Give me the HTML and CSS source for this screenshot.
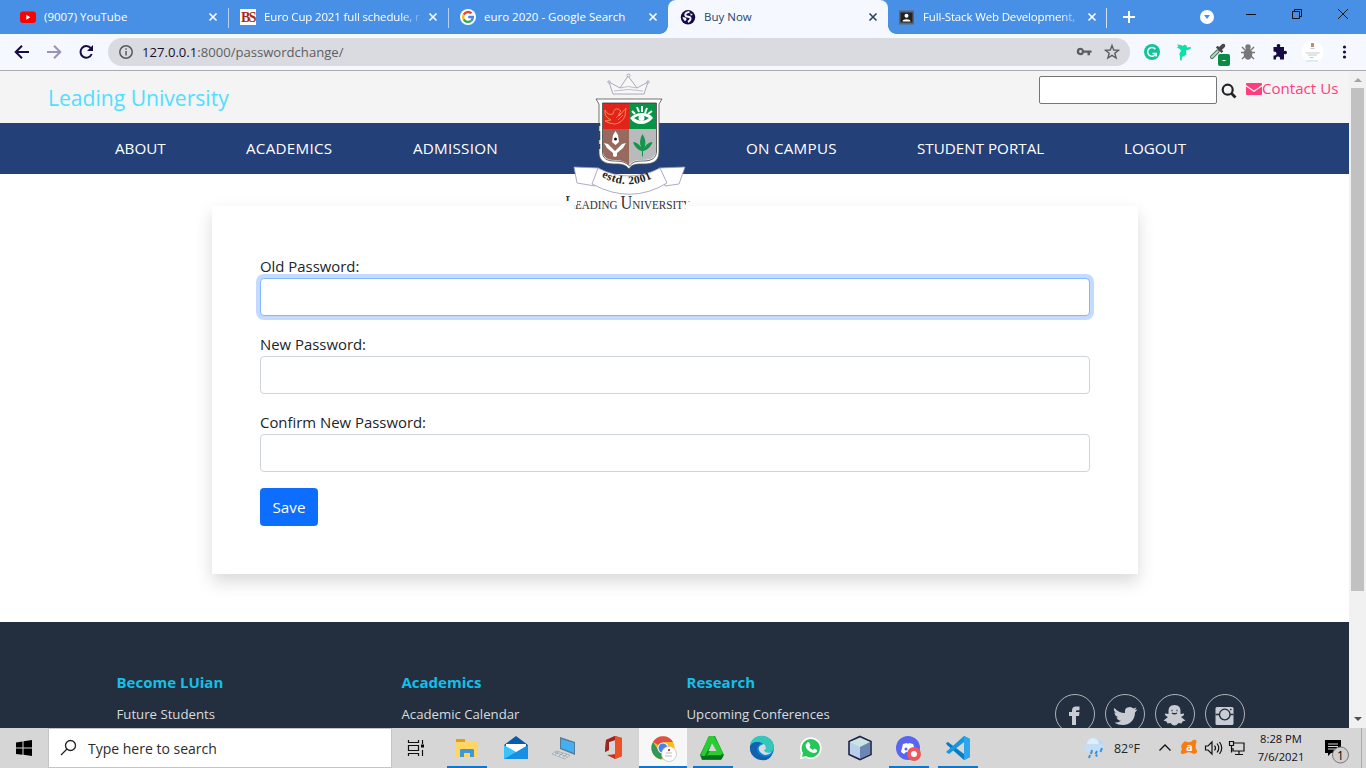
FILE: index.html
```html
<!DOCTYPE html>
<html lang="en">
<head>
<meta charset="utf-8">
<title>Buy Now</title>
<link rel="stylesheet" href="styles.css">
</head>
<body>
<div class="desktop">
  <div class="tabstrip">
    <div class="tab">
      <svg class="fav" viewBox="0 0 16 16"><rect y="2.5" width="16" height="11.5" rx="3" fill="#f00"/><path d="M6.3 5.8v5l4-2.5z" fill="#fff"/></svg>
      <span class="tab-title">(9007) YouTube</span>
      <svg class="x" viewBox="0 0 10 10"><path d="M1.5 1.5l7 7M8.500 1.500l-7 7"/></svg>
    </div>
    <div class="tab sep">
      <span class="fav bs">BS</span>
      <span class="tab-title fade">Euro Cup 2021 full schedule, r</span>
      <svg class="x" viewBox="0 0 10 10"><path d="M1.5 1.5l7 7M8.500 1.500l-7 7"/></svg>
    </div>
    <div class="tab sep">
      <svg class="fav" viewBox="0 0 16 16"><circle cx="8" cy="8" r="8" fill="#fff"/><g fill="none" stroke-width="2.300"><path d="M11.500 4.400A5 5 0 0 0 3.700 5.600" stroke="#ea4335"/><path d="M3.700 5.600a5 5 0 0 0 0 4.800" stroke="#fbbc05"/><path d="M3.700 10.400a5 5 0 0 0 7.400 1.400" stroke="#34a853"/><path d="M11.100 11.800A5 5 0 0 0 12.900 8H8.200" stroke="#4285f4"/></g></svg>
      <span class="tab-title">euro 2020 - Google Search</span>
      <svg class="x" viewBox="0 0 10 10"><path d="M1.5 1.5l7 7M8.500 1.500l-7 7"/></svg>
    </div>
    <div class="tab active">
      <svg class="fav" viewBox="0 0 16 16"><circle cx="8" cy="8.300" r="7.200" fill="#170b47"/><path d="M9.500 3Q5 3.500 5.300 6q.4 1.700 3 1.700 2.500.3 2.200 2.300-.5 2-2.500 3" fill="none" stroke="#f5f8ff" stroke-width="2"/><path d="M2.500 8l3.500.8.500 2-1.500 1.500q-2.300-1.600-2.500-4.300M10.500 4l2.500 2-2.500.5z" fill="#f5f8ff"/></svg>
      <span class="tab-title">Buy Now</span>
      <svg class="x" viewBox="0 0 10 10"><path d="M1.5 1.5l7 7M8.500 1.500l-7 7"/></svg>
    </div>
    <div class="tab last">
      <svg class="fav" viewBox="0 0 16 16"><path d="M0 1.500h15v14H0z" fill="#606470"/><path d="M1.500 3.500h12v10h-12z" fill="#222"/><circle cx="7.500" cy="6.700" r="2" fill="#fff"/><path d="M3.500 12.500c0-3 8-3 8 0z" fill="#fff"/></svg>
      <span class="tab-title fade">Full-Stack Web Development,</span>
      <svg class="x" viewBox="0 0 10 10"><path d="M1.5 1.5l7 7M8.500 1.500l-7 7"/></svg>
    </div>
    <svg class="window-tools" viewBox="0 0 260 34"><path d="M.5 8v20" stroke="#d0e1f8"/><path d="M17 17h12M23 11v12" stroke="#fff" stroke-width="2"/><circle cx="101" cy="17" r="7" fill="#fff"/><path d="M98 15h6l-3 4z" fill="#4790e6"/><g fill="none" stroke="#111"><path d="M140 14.500h10M186.500 11.500h7v7h-7zM188.500 11V9.500h7v7H194M232 9l10 10M242 9l-10 10"/></g></svg>
  </div>

  <div class="toolbar">
    <svg class="navicons" viewBox="0 0 108 36"><g fill="none" stroke-width="2"><path d="M29 18H16m6-6.300L15.700 18l6.300 6.300" stroke="#170b47"/><path d="M47 18h13m-6-6.300l6.300 6.300-6.300 6.300" stroke="#9a93b9"/><path d="M90.800 14.200A5.800 5.800 0 1 0 91.700 20" stroke="#170b47"/></g><path d="M93 11v6h-6z" fill="#170b47"/></svg>
    <div class="address">
      <svg class="info" viewBox="0 0 16 16"><circle cx="8" cy="8" r="6.200" fill="none" stroke="#555960" stroke-width="1.500"/><path d="M7.300 7h1.500v4.500H7.300zM7.300 4.300h1.500v1.500H7.300z" fill="#555960"/></svg>
      <span class="url"><b>127.0.0.1</b>:8000/passwordchange/</span>
      <svg class="key" viewBox="0 0 50 20"><path fill="#5b5d61" fill-rule="evenodd" d="M4.500 5.800a3.700 3.700 0 1 0 3.500 4.900h3.500v2.600H14v-2.600h1.500V8.400H8a3.700 3.700 0 0 0-3.500-2.600zm0 2.300a1.400 1.400 0 1 1 0 2.800 1.400 1.400 0 0 1 0-2.800z"/><path d="M36 3.500l1.700 4.500 4.800.3-3.700 3 1.300 4.700-4.100-2.600-4.100 2.600 1.300-4.700-3.700-3 4.800-.3z" fill="none" stroke="#5b5d61" stroke-width="1.400"/></svg>
    </div>
    <svg class="ext" viewBox="0 0 232 36">
      <circle cx="18" cy="18" r="8" fill="#15c39a"/><path d="M21.300 15.200a4.300 4.300 0 1 0 .7 4.200h-3.500M22.200 19v3.500" fill="none" stroke="#fff" stroke-width="1.500"/>
      <path d="M43 10.500l4 .5 2 1q1-2 3.500-.5l.5 2 4-.5-.5 2-4.500 1.500.500 4-2.500 1.500-2 1-.5 4-1.500-1 0-3.500q-1.500-3 1-5.500l-1-2-3.500-1.500 2-.5z" fill="#10dfaa"/>
      <g transform="rotate(45 84 17)"><rect x="82.500" y="16" width="3" height="11" rx="1.500" fill="#9fe3bd" stroke="#52725f"/><path d="M82 9q2-3 4 0v4.500h2V16h-8v-2.500h2z" fill="#4a484a"/></g><rect x="84" y="20" width="12" height="12" rx="2" fill="#078b45"/><path d="M88.500 26.500h3" stroke="#fff"/>
      <g stroke="#777" stroke-width="1.400" fill="#777"><ellipse cx="114" cy="20" rx="3.600" ry="5"/><circle cx="114" cy="13" r="2"/><path d="M108 13l3 3M120 13l-3 3M107 18.500h14M108 25l3-3M120 25l-3-3" fill="none"/></g>
      <path d="M139.500 13h3.500q-1-3 1.500-3t1.500 3h4v4q3-1 3 1.500t-3 1.500v5.500h-4q.5-3-2-3t-2 3h-2.500v-4q3 0 3-2t-3-2z" fill="#170b47"/>
      <circle cx="178.500" cy="18" r="11" fill="#fff"/><path d="M177 9h3v4h-3z" fill="#bc8d83"/><path d="M176.500 14.500h4M171.500 19h14M174 21h9M175.500 23.500h4" stroke="#c9c9cd"/><path d="M172 27h12" stroke="#b4dcf2"/>
      <g fill="#170b47"><circle cx="210.500" cy="13" r="1.600"/><circle cx="210.500" cy="18" r="1.600"/><circle cx="210.500" cy="23" r="1.600"/></g>
    </svg>
  </div>

  <div class="viewport">
    <div class="page">
      <header class="topbar">
        <a class="brand">Leading University</a>
        <div class="search-area">
          <input class="search" type="text">
          <svg class="glass" viewBox="0 0 16 16"><circle cx="6.700" cy="6.700" r="5" fill="none" stroke="#212529" stroke-width="2.200"/><path d="M10.300 10.300l4.200 4.200" stroke="#212529" stroke-width="2.800"/></svg>
          <a class="contact"><svg viewBox="0 0 16 12"><path d="M1 0h14q1 0 1 1v1L8 7.500 0 2V1q0-1 1-1zM0 3.500L8 9l8-5.500V11q0 1-1 1H1q-1 0-1-1z" fill="#ff3d7f"/></svg><span>Contact Us</span></a>
        </div>
      </header>
      <nav class="nav">
        <a>ABOUT</a><a class="wide">ACADEMICS</a><a class="wide">ADMISSION</a><a class="wide">ON CAMPUS</a><a>STUDENT PORTAL</a><a>LOGOUT</a>
      </nav>
      <svg class="crest" viewBox="0 3 160 147">
        <defs>
          <clipPath id="seal"><path d="M16 125h4.500v8H16zM24 137h3v-12h107v18H24zM134 129h7v3l-2 2-3 1v8h-3z"/></clipPath>
          <clipPath id="shield"><path d="M53 35h53v47c0 7-5 10-13 10-7 0-11 1-14 5-4-4-9-5-15-5-7 0-11-3-11-9z"/></clipPath>
          <path id="motto" d="M50.500 108Q79 125 108 107"/>
        </defs>
        <path d="M63 26l-4-12 11 6 8-12 9 12 11-6-4 12z" fill="#f7f7f8" stroke="#9a95b0" stroke-width=".8"/>
        <path d="M64 23q15-3 29 0M70 20q8-3 17 0" fill="none" stroke="#a6a2b5" stroke-width=".7"/>
        <g fill="#f7f7fa" stroke="#827c99" stroke-width=".6"><circle cx="78.500" cy="7.500" r="1.500"/><circle cx="59" cy="14" r="1.200"/><circle cx="98" cy="14" r="1.200"/></g>
        <path d="M46 31h66l-3 5v48c0 10-7 12-15 12-8 0-12 0-15 5-4-5-8-5-15-5-9 0-15-3-15-11V36z" fill="#fff" stroke="#51524d" stroke-width=".8"/>
        <path d="M49.500 55v3M49.500 63v9M49.500 76v5" stroke="#244078" stroke-width="1.500"/>
        <g clip-path="url(#shield)"><path d="M53 35h26v26H53z" fill="#e2231c"/><path d="M79 35h28v26H79z" fill="#079447"/><path d="M53 61h26v38H53z" fill="#98695d"/><path d="M79 61h28v38H79z" fill="#b8babb"/></g>
        <path d="M52.500 35h54v48c0 7-5 10-13 10-8 0-11 1-14 5-4-4-8-5-15-5-8 0-12-3-12-9z" fill="none" stroke="#353935" stroke-width=".8"/>
        <path d="M55 42q3 6 8 4 1-6 5-5l3 2-2 2 0 3 7-8-1 8q-3 7-10 8-5 0-10-3l6-1q-7-3-6-10M66 50l5-5M68 52l5-5" fill="none" stroke="#f0a35b" stroke-width=".8"/>
        <path d="M80 50q5-5 12-5 8 0 11 5-5 6-12 6-7 0-11-6z" fill="#fff"/><path d="M82 43l3 3M87 39l2 5M92 38v6M97 40l-2 5M102 43l-4 3" stroke="#fff" stroke-width="2"/><path d="M84 50q7-5 15 0-7 6-15 0" fill="#079447"/><circle cx="91.500" cy="50" r="3" fill="#fff"/>
        <path d="M62 74l1-7 2.500-4 2.500 4 1 7-3.500 3z" fill="#fff"/><circle cx="65.500" cy="71" r="1.500" fill="#111"/><path d="M54 75l4 1 7 7 7-7 4-1-3 5-6 5v3l-2 1-2-1v-3l-6-5z" fill="#fff"/>
        <path d="M92.500 66q4.500 7 2 13 4-5 8-5-2 6-7.500 8.500l-2 .5v5.500h-1V83l-2-.5q-5-2.500-7-8.500 4 0 8 5-2.500-6 1.500-13" fill="#12964c"/>
        <g fill="#fff" stroke="#9a95b8" stroke-width=".8"><path d="M49 100l-25-1 3 16 18 3 1-8z"/><path d="M109 100l26-1-6 17-14 2-1-8z"/><path d="M48 100q31 16 62 0l7 15q-36 22-75 1z"/></g>
        <text class="motto"><textPath href="#motto" startOffset="1">estd. 2001</textPath></text>
        <g clip-path="url(#seal)"><text class="crest-name" x="15" y="141" textLength="126" lengthAdjust="spacingAndGlyphs"><tspan class="cap">L</tspan>EADING <tspan class="cap">U</tspan>NIVERSITY</text></g>
      </svg>
      <main class="content">
        <form class="card">
          <label>Old Password:</label><input class="field focus" type="text">
          <label>New Password:</label><input class="field" type="text">
          <label>Confirm New Password:</label><input class="field" type="text">
          <button class="save" type="button">Save</button>
        </form>
      </main>
      <footer class="footer">
        <div class="fcol"><h3>Become LUian</h3><a>Future Students</a></div>
        <div class="fcol"><h3>Academics</h3><a>Academic Calendar</a></div>
        <div class="fcol fwide"><h3>Research</h3><a>Upcoming Conferences</a></div>
        <div class="social">
          <svg viewBox="0 0 40 40"><circle cx="20" cy="20" r="19.500"/><path d="M17 31v-9h-3v-4h3v-1.500q0-4 4-4h3.500v3.700H22q-1 0-1 1V18h3.500l-.5 4h-3v9z"/></svg>
          <svg viewBox="0 0 40 40"><circle cx="20" cy="20" r="19.500"/><path d="M9.500 14q4 5 10.500 5-1-6 5-6 2 0 3.500 1.500l3-1-1.500 2.500 2.500-.5-2.500 3c0 8-6 12.500-12 12.500q-5 0-8.500-2.200 4 0 6.500-2-3.500-.2-4.500-3.500h2q-4-1-4-5l2 .5q-4-2-2-4.800z"/></svg>
          <svg viewBox="0 0 40 40"><circle cx="20" cy="20" r="19.500"/><path d="M13.500 18q-.5-7 6-7t6 7v2l3.500-.5q.5 2-3 3.500l4.500 3.500-3 1-1 2-3-.5q-2 2.500-4 2.500t-4-2.500l-3 .5-1-2-3-1 4.500-3.500q-3.500-1.500-3-3.500l3.500.5z"/><path class="cut" d="M16.500 16.500h1M21.500 16.500h1M17 19q2.500 1.500 5 0"/></svg>
          <svg viewBox="0 0 40 40"><circle cx="20" cy="20" r="19.500"/><rect x="10.500" y="13" width="18" height="18" rx="1.500"/><path class="cut" d="M10.500 20.500h4.500M24.500 20.500h4M25 15.500h1.500M17 16a5.300 5.300 0 1 0 5.500 0 5.300 5.300 0 0 0-5.500 0z"/></svg>
        </div>
      </footer>
    </div>
    <div class="scrollbar"><i class="up"></i><i class="thumb"></i><i class="down"></i></div>
  </div>

  <div class="taskbar">
    <svg class="start" viewBox="0 0 48 40"><path d="M16 14.500l6.500-1v6H16zM23.500 13.300l8.500-1.300v7.500h-8.500zM16 20.500h6.500v6.300L16 26zM23.500 20.500H32V28l-8.500-1.200z"/></svg>
    <div class="tasksearch"><svg viewBox="0 0 18 18"><circle cx="10.500" cy="6.500" r="5" fill="none" stroke="#222" stroke-width="1.300"/><path d="M7 10l-6 6" stroke="#222" stroke-width="1.300"/></svg><span>Type here to search</span></div>
    <svg class="app first" viewBox="0 0 50 40"><path d="M16.500 12v2.500h10V12M16.500 28v-2.500h10V28M16.500 17.500h10v5h-10zM30.500 12v4M30.500 22v6" fill="none" stroke="#111" stroke-width="1.200"/><path d="M29 16.500h3v3h-3z"/></svg>
    <svg class="app open" viewBox="0 0 49 40"><path d="M14 11h9l2 2h10v16H14z" fill="#ffd565"/><path d="M14 11h9v3h-9z" fill="#dda018"/><path d="M18 22q0-1 1-1h12q1 0 1 1v7h-4v-4h-6v4h-4z" fill="#3c98d7"/></svg>
    <svg class="app" viewBox="0 0 49 40"><path d="M13 17L25 8l12 9v3H13z" fill="#075ba9"/><path d="M15 16h20v10H15z" fill="#fff"/><path d="M13 17l24 14H13z" fill="#38c4fb"/><path d="M37 17L13 31h24z" fill="#178fe4"/></svg>
    <svg class="app" viewBox="0 0 49 40"><path d="M20 9l15 5v13l-15-6z" fill="#567b99"/><path d="M21 11l13 4v10l-13-5z" fill="#42b0f3"/><path d="M16 23l14 4-5 4-13-5z" fill="#dce0e3" stroke="#98a3a9" stroke-width=".7"/><path d="M15 24.500l12 4M19 23.500l-4 3M23 25l-4 3M27 26l-4 3.500" stroke="#8c979e" stroke-width=".7"/></svg>
    <svg class="app" viewBox="0 0 49 40"><path d="M26 8l-9 4-1 12 4-2v-8l6-2v14l-8 1 8 4 7-3V10z" fill="#c9301c"/><path d="M26 8l-9 4-1 12 4-2v-8l6-2z" fill="#9c2423"/><path d="M26 8l7 2v18l-7 3z" fill="#ec5225"/><path d="M21 15l5-1.500V26l-5 .5z" fill="#d6d6d6"/></svg>
    <svg class="app open current" viewBox="0 0 48 40"><g transform="translate(24 20)"><circle r="11.500" fill="#fbbd14"/><path d="M0 0L-10-6A11.500 11.500 0 0 1 10-6H0z" fill="#dc5248"/><path d="M-10-6A11.500 11.500 0 0 0-2 11.300L4 3-4 3z" fill="#319859"/><circle r="5.500" fill="#fff"/><circle r="4.500" fill="#4383ed"/><circle cx="6" cy="6" r="7.500" fill="#fff" stroke="#bbb" stroke-width=".7"/><path d="M3 5h6M2 8h7" stroke="#bbb"/><path d="M5 1h2v2H5z" fill="#b54f47"/></g></svg>
    <svg class="app open" viewBox="0 0 49 40"><path d="M21 8h6l9 19-3 5H14l-2-5z" fill="#09911e"/><path d="M20 9l2-1h4l9 17-2 2H19l3-4h6l-4-8-8 14-3-2z" fill="#2bcc32"/><path d="M24 15l4.500 8h-8z" fill="#d6d6d6"/><path d="M13 28h20l2-2-1 5H14z" fill="#087119"/></svg>
    <svg class="app" viewBox="0 0 49 40"><circle cx="25" cy="20" r="12" fill="#0b82d5"/><path d="M13 17C16 4 35 5 37 19q0 5-6 6-5 0-4-3 3-7-6-8-6 0-8 3z" fill="#35c8ba"/><path d="M13 18q5-6 11-3-7 5-2 11 6 5 13 1-5 8-14 4-9-4-8-13z" fill="#1260ae"/><path d="M27 16q4 5 0 6 1 4 8 2-6 6-12 0-4-6 4-8z" fill="#d8dadb"/></svg>
    <svg class="app" viewBox="0 0 49 40"><path d="M15 30l1-5a10 10 0 1 1 4 4z" fill="#25c65a" stroke="#fff" stroke-width="1.700"/><path d="M21 15q1-2 2.500 0l1 2.500-1 1.500q1 2 3.500 3l1.500-1.500 2.500 1.500q.5 3-3.500 3-7-1.500-8-7.500 0-1.500 1.500-2.500z" fill="#fff"/></svg>
    <svg class="app" viewBox="0 0 49 40"><path d="M25 8.500l11 5v13l-11 5-11-5v-13z" fill="#b9d0eb" stroke="#202247" stroke-width="1.600"/><path d="M15 14l10 5 10-5-10-4z" fill="#cce4df"/><path d="M25 19l10-5v12l-10 5z" fill="#6a87b4"/></svg>
    <svg class="app open" viewBox="0 0 49 40"><circle cx="24" cy="20" r="12" fill="#5965ef"/><path d="M17 24l2-8 4-1 1 1 1-1 4 1 3 8-4 2-2-2h-4l-2 2z" fill="#fff"/><circle cx="22" cy="21" r="1.500" fill="#5965ef"/><circle cx="30" cy="26" r="7" fill="#ee585a"/><circle cx="30" cy="26" r="3" fill="#fff"/></svg>
    <svg class="app open" viewBox="0 0 49 40"><path d="M31 8l6 3v18l-6 3-17-15-1-2 2-1 16 12V8z" fill="#087dc4"/><path d="M31 8v6L16 26l-3-2z" fill="#1797dc"/><path d="M31 8l6 3v18l-6 3z" fill="#2ca7ee"/></svg>
    <div class="tray">
      <svg class="weather" viewBox="0 0 24 24"><circle cx="15" cy="9" r="5.500" fill="#b7d9f7"/><circle cx="10" cy="8" r="6" fill="#dcedfb"/><rect x="1" y="8" width="20" height="8" rx="4" fill="#c5def6"/><path d="M9 14l-1 4M14 15l-1.500 3M19 12l-1.500 4M7 19l-1 3M14 18.500l-1 2" stroke="#2d94e6" stroke-width="2"/></svg>
      <span class="temp">82°F</span>
      <svg class="trayicons" viewBox="0 0 96 40"><path d="M7.500 22.500l5.500-5.500 5.500 5.500" fill="none" stroke="#111" stroke-width="1.300"/><path d="M31 15q2-3 4-1 4 1 6-2 5-1 3 4-1 3 0 5 3 4-2 5l-5-2-6 2q-4 0-1-5-2-3 1-6z" fill="#f77c12"/><text class="av" x="34" y="23">a</text><path d="M53.500 18H56l4-4v12l-4-4h-2.500zM62.500 17.500q2 2.500 0 5M65 15.500q3.500 4.500 0 9M67.500 14q4.500 6 0 12" fill="none" stroke="#111" stroke-width="1.200"/><path d="M82 15h10v8H81v-3M87 23v3M83 26.500h8M77.500 13.500h4v4h-4zM79.500 17.500v7" fill="none" stroke="#111" stroke-width="1.200"/></svg>
      <div class="clock"><span>8:28 PM</span><span>7/6/2021</span></div>
      <svg class="notice" viewBox="0 0 44 40"><path d="M5 12h16v13H11l-3 3v-3H5z"/><path d="M8 16h10M8 18.500h10M8 21h7" stroke="#d8d8d8"/><circle cx="20.500" cy="27" r="8" fill="#cfcfcf" stroke="#777"/><text x="17" y="31.500">1</text><path d="M41.500 0v40" stroke="#aaa"/></svg>
    </div>
  </div>
</div>
</body>
</html>
```
FILE: styles.css
```css
* { box-sizing: border-box; }
body { margin: 0; font-family: "Open Sans", "Noto Sans", sans-serif; color: #212529; }
svg { display: block; flex: none; }
.desktop { width: 1366px; height: 768px; overflow: hidden; display: flex; flex-direction: column; }

.tabstrip { height: 34px; background: #4790e6; display: flex; padding-left: 8px; flex: none; }
.tab { width: 220px; height: 34px; padding: 0 10px 0 12px; display: flex; align-items: center; color: #fff; position: relative; flex: none; }
.tab.sep::before { content: ""; position: absolute; left: 0; top: 8px; width: 1px; height: 20px; background: #b4d2f6; }
.fav { width: 16px; height: 16px; flex: none; }
.bs { background: #fff; color: #a62a17; font: bold 14px/17px "Liberation Serif", serif; text-align: center; letter-spacing: -1.5px; }
.tab-title { flex: 1; min-width: 0; margin-left: 8px; font-size: 11.5px; line-height: 34px; white-space: nowrap; }
.fade { letter-spacing: -.15px; -webkit-mask-image: linear-gradient(90deg, #000 136px, transparent 162px); mask-image: linear-gradient(90deg, #000 136px, transparent 162px); }
.x { width: 10px; height: 10px; stroke: #fff; stroke-width: 1.6; margin-left: 4px; }
.active { background: #f5f8ff; color: #26446b; border-radius: 8px 8px 0 0; }
.active .x { stroke: #26446b; }
.active::before, .active::after { content: ""; position: absolute; bottom: 0; width: 8px; height: 8px; }
.active::before { left: -8px; background: radial-gradient(circle at 0 0, transparent 7.5px, #f5f8ff 8px); }
.active::after { right: -8px; background: radial-gradient(circle at 100% 0, transparent 7.5px, #f5f8ff 8px); }
.tab.last { width: 219px; padding-left: 11px; }
.window-tools { width: 260px; height: 34px; margin-left: -1px; }

.toolbar { height: 37px; background: #f5f8ff; border-bottom: 1px solid #a9abb1; display: flex; flex: none; }
.navicons { width: 108px; height: 36px; }
.address { width: 1022px; height: 28px; margin-top: 4px; border-radius: 14px; background: #d9dbe0; display: flex; align-items: center; padding: 0 4px 0 10px; }
.info { width: 16px; height: 16px; }
.url { flex: 1; margin-left: 8px; font-size: 13.1px; color: #5c5f63; }
.url b { font-weight: 400; color: #170f2e; }
.key { width: 50px; height: 20px; }
.ext { width: 232px; height: 36px; margin-left: 4px; }

.viewport { height: 657px; display: flex; flex: none; }
.page { width: 1349px; height: 657px; overflow: hidden; background: #fff; position: relative; display: flex; flex-direction: column; }
.topbar { height: 52px; background: #f4f4f4; display: flex; justify-content: space-between; padding: 0 10px 0 48px; flex: none; }
.brand { color: #4fdfff; font-size: 21.1px; line-height: 54px; }
.search-area { display: flex; align-items: flex-start; padding-top: 5px; }
.search { width: 178px; height: 28px; border: 1px solid #767676; border-radius: 2px; background: #fff; padding: 0; }
.glass { width: 16px; height: 16px; margin: 7px 9px 0 4px; }
.contact { color: #ff3d7f; font-size: 15.1px; line-height: 25px; display: flex; width: 93px; white-space: nowrap; }
.contact svg { width: 16px; height: 12px; margin-top: 7px; }
.nav { height: 51px; background: #244078; color: #fff; font-size: 15.2px; line-height: 51px; display: grid; grid-template-columns: 131px 167px 333px 171px 207px auto; padding-left: 115px; white-space: nowrap; flex: none; }
.nav .wide { letter-spacing: .25px; }
.crest { position: absolute; left: 550px; top: 0; width: 160px; height: 147px; z-index: 2; }
.motto { font: bold 11.5px "Liberation Serif", serif; fill: #222; letter-spacing: .5px; }
.crest-name { font: 13px "Liberation Serif", serif; fill: #333; }
.cap { font-size: 19px; }
.content { padding: 32px 211px 48px 212px; flex: none; }
.card { height: 368px; background: #fff; box-shadow: 0 8px 16px rgba(0, 0, 0, .15); padding: 48px; }
.card label { display: block; font-size: 14.9px; line-height: 24px; color: #212529; }
.field { display: block; width: 830px; height: 38px; border: 1px solid #ced4da; border-radius: 4px; margin: 0 0 16px; background: #fff; }
.focus { border-color: #86b7fe; box-shadow: 0 0 0 4px #c2dbff; outline: none; }
.save { display: block; width: 58px; height: 38px; padding: 0; border: 0; border-radius: 4px; background: #0d6efd; color: #fff; font: 15.2px "Open Sans", sans-serif; }
.footer { height: 106px; background: #232f3f; padding: 48px 103.5px 0 116.5px; display: flex; flex: none; }
.fcol { width: 285px; }
.fwide { width: 368.5px; }
.fcol h3 { margin: 0; color: #14bfe8; font-size: 15px; font-weight: 700; line-height: 24px; }
.fcol a { display: block; margin-top: 9px; font-size: 13.2px; line-height: 22px; color: #d8dbdf; white-space: nowrap; }
.social { display: flex; gap: 10px; padding-top: 24px; }
.social svg { width: 40px; height: 40px; fill: #c9cdd3; }
.social circle { fill: none; stroke: #aeb3b9; }
.social .cut { fill: none; stroke: #232f3f; stroke-width: 1.4; }

.scrollbar { width: 17px; background: #f1f1f1; display: flex; flex-direction: column; align-items: center; }
.up { border: 4px solid transparent; border-top: 0; border-bottom: 4px solid #a3a3a3; margin: 7px 0 6px; }
.thumb { width: 13px; height: 503px; background: #c1c1c1; }
.down { border: 4px solid transparent; border-bottom: 0; border-top: 4px solid #505050; margin-top: 126px; }

.taskbar { height: 40px; background: #d6d6d6; display: flex; flex: none; }
.start { width: 48px; height: 40px; }
.tasksearch { width: 344px; height: 40px; border: 1px solid #c5c5c5; background: #fff; display: flex; align-items: center; padding-left: 11px; flex: none; }
.tasksearch svg { width: 18px; height: 18px; }
.tasksearch span { margin-left: 10px; font-size: 14px; color: #2c2c2c; }
.app { width: 49px; height: 40px; }
.app.first { width: 50px; }
.app.open { background: linear-gradient(#0878d7, #0878d7) 50% 100% / 40px 2px no-repeat; }
.app.open.current { background: linear-gradient(#0878d7, #0878d7) 50% 100% / 48px 2px no-repeat, #f7f7f7; width: 48px; margin: 0 1px; }
.tray { flex: 1; display: flex; align-items: center; justify-content: flex-end; }
.weather { width: 24px; height: 24px; }
.temp { margin-left: 7px; width: 33px; font-size: 12.4px; white-space: nowrap; }
.trayicons { width: 96px; height: 40px; margin-left: 5px; }
.av { font: bold 11px "Open Sans", sans-serif; fill: #fff; }
.clock { width: 66px; margin-right: 6px; display: flex; flex-direction: column; align-items: center; font-size: 11.2px; line-height: 18px; color: #111; }
.notice { width: 44px; height: 40px; margin-right: 2px; font-size: 12px; }
```
